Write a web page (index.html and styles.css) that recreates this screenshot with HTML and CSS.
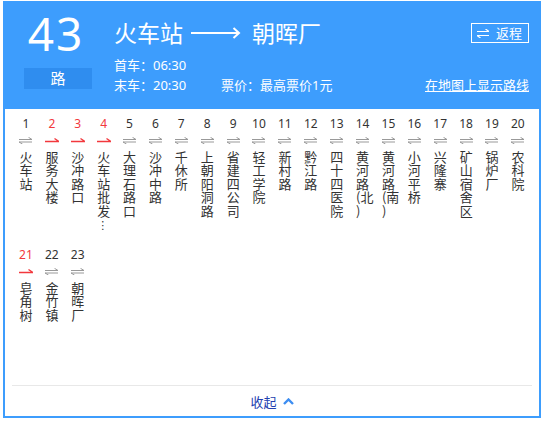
FILE: index.html
```html
<!DOCTYPE html>
<html lang="zh-CN">
<head>
<meta charset="utf-8">
<title>43路</title>
<link rel="stylesheet" href="styles.css">
</head>
<body>
<div class="panel">
  <header class="head">
    <div class="num-block">
      <div class="num">43</div>
      <div class="lu">路</div>
    </div>
    <div class="info">
      <div class="title-row">
        <span class="stn">火车站</span>
        <svg class="long-arrow" width="50" height="12" viewBox="0 0 50 12"><line x1="0" y1="6" x2="48" y2="6" stroke="#fff" stroke-width="2"/><polyline points="42.5,1 48,6 42.5,11" fill="none" stroke="#fff" stroke-width="2"/></svg>
        <span class="stn">朝晖厂</span>
        <a class="back"><svg width="12" height="9" viewBox="0 0 12 9"><path d="M0 2.5H12L8.5 0M12 6.5H0L3.5 9" fill="none" stroke="#fff" stroke-width="1.2"/></svg><span>返程</span></a>
      </div>
      <div class="line">首车：06:30</div>
      <div class="line meta">
        <span class="last">末车：20:30</span>
        <span>票价：最高票价1元</span>
        <a class="maplink">在地图上显示路线</a>
      </div>
    </div>
  </header>

  <ul class="stops">
    <li class="stop"><span class="n">1</span><svg class="arr" width="13" height="7" viewBox="0 0 13 7"><path d="M0 2.5H13L9.5 0.3M13 5H0L3.5 7" fill="none" stroke="#999" stroke-width="1"/></svg><div class="name">火<br>车<br>站</div></li>
    <li class="stop red"><span class="n">2</span><svg class="arr" width="14" height="7" viewBox="0 0 14 7"><path d="M0 4.5H14L9.5 1.5" fill="none" stroke="#f2383d" stroke-width="1.4"/></svg><div class="name">服<br>务<br>大<br>楼</div></li>
    <li class="stop red"><span class="n">3</span><svg class="arr" width="14" height="7" viewBox="0 0 14 7"><path d="M0 4.5H14L9.5 1.5" fill="none" stroke="#f2383d" stroke-width="1.4"/></svg><div class="name">沙<br>冲<br>路<br>口</div></li>
    <li class="stop red"><span class="n">4</span><svg class="arr" width="14" height="7" viewBox="0 0 14 7"><path d="M0 4.5H14L9.5 1.5" fill="none" stroke="#f2383d" stroke-width="1.4"/></svg><div class="name">火<br>车<br>站<br>批<br>发<br><span class="ell">⋮</span></div></li>
    <li class="stop"><span class="n">5</span><svg class="arr" width="13" height="7" viewBox="0 0 13 7"><path d="M0 2.5H13L9.5 0.3M13 5H0L3.5 7" fill="none" stroke="#999" stroke-width="1"/></svg><div class="name">大<br>理<br>石<br>路<br>口</div></li>
    <li class="stop"><span class="n">6</span><svg class="arr" width="13" height="7" viewBox="0 0 13 7"><path d="M0 2.5H13L9.5 0.3M13 5H0L3.5 7" fill="none" stroke="#999" stroke-width="1"/></svg><div class="name">沙<br>冲<br>中<br>路</div></li>
    <li class="stop"><span class="n">7</span><svg class="arr" width="13" height="7" viewBox="0 0 13 7"><path d="M0 2.5H13L9.5 0.3M13 5H0L3.5 7" fill="none" stroke="#999" stroke-width="1"/></svg><div class="name">千<br>休<br>所</div></li>
    <li class="stop"><span class="n">8</span><svg class="arr" width="13" height="7" viewBox="0 0 13 7"><path d="M0 2.5H13L9.5 0.3M13 5H0L3.5 7" fill="none" stroke="#999" stroke-width="1"/></svg><div class="name">上<br>朝<br>阳<br>洞<br>路</div></li>
    <li class="stop"><span class="n">9</span><svg class="arr" width="13" height="7" viewBox="0 0 13 7"><path d="M0 2.5H13L9.5 0.3M13 5H0L3.5 7" fill="none" stroke="#999" stroke-width="1"/></svg><div class="name">省<br>建<br>四<br>公<br>司</div></li>
    <li class="stop"><span class="n">10</span><svg class="arr" width="13" height="7" viewBox="0 0 13 7"><path d="M0 2.5H13L9.5 0.3M13 5H0L3.5 7" fill="none" stroke="#999" stroke-width="1"/></svg><div class="name">轻<br>工<br>学<br>院</div></li>
    <li class="stop"><span class="n">11</span><svg class="arr" width="13" height="7" viewBox="0 0 13 7"><path d="M0 2.5H13L9.5 0.3M13 5H0L3.5 7" fill="none" stroke="#999" stroke-width="1"/></svg><div class="name">新<br>村<br>路</div></li>
    <li class="stop"><span class="n">12</span><svg class="arr" width="13" height="7" viewBox="0 0 13 7"><path d="M0 2.5H13L9.5 0.3M13 5H0L3.5 7" fill="none" stroke="#999" stroke-width="1"/></svg><div class="name">黔<br>江<br>路</div></li>
    <li class="stop"><span class="n">13</span><svg class="arr" width="13" height="7" viewBox="0 0 13 7"><path d="M0 2.5H13L9.5 0.3M13 5H0L3.5 7" fill="none" stroke="#999" stroke-width="1"/></svg><div class="name">四<br>十<br>四<br>医<br>院</div></li>
    <li class="stop"><span class="n">14</span><svg class="arr" width="13" height="7" viewBox="0 0 13 7"><path d="M0 2.5H13L9.5 0.3M13 5H0L3.5 7" fill="none" stroke="#999" stroke-width="1"/></svg><div class="name">黄<br>河<br>路<br>(北<br>)</div></li>
    <li class="stop"><span class="n">15</span><svg class="arr" width="13" height="7" viewBox="0 0 13 7"><path d="M0 2.5H13L9.5 0.3M13 5H0L3.5 7" fill="none" stroke="#999" stroke-width="1"/></svg><div class="name">黄<br>河<br>路<br>(南<br>)</div></li>
    <li class="stop"><span class="n">16</span><svg class="arr" width="13" height="7" viewBox="0 0 13 7"><path d="M0 2.5H13L9.5 0.3M13 5H0L3.5 7" fill="none" stroke="#999" stroke-width="1"/></svg><div class="name">小<br>河<br>平<br>桥</div></li>
    <li class="stop"><span class="n">17</span><svg class="arr" width="13" height="7" viewBox="0 0 13 7"><path d="M0 2.5H13L9.5 0.3M13 5H0L3.5 7" fill="none" stroke="#999" stroke-width="1"/></svg><div class="name">兴<br>隆<br>寨</div></li>
    <li class="stop"><span class="n">18</span><svg class="arr" width="13" height="7" viewBox="0 0 13 7"><path d="M0 2.5H13L9.5 0.3M13 5H0L3.5 7" fill="none" stroke="#999" stroke-width="1"/></svg><div class="name">矿<br>山<br>宿<br>舍<br>区</div></li>
    <li class="stop"><span class="n">19</span><svg class="arr" width="13" height="7" viewBox="0 0 13 7"><path d="M0 2.5H13L9.5 0.3M13 5H0L3.5 7" fill="none" stroke="#999" stroke-width="1"/></svg><div class="name">锅<br>炉<br>厂</div></li>
    <li class="stop"><span class="n">20</span><svg class="arr" width="13" height="7" viewBox="0 0 13 7"><path d="M0 2.5H13L9.5 0.3M13 5H0L3.5 7" fill="none" stroke="#999" stroke-width="1"/></svg><div class="name">农<br>科<br>院</div></li>
    <li class="stop red"><span class="n">21</span><svg class="arr" width="14" height="7" viewBox="0 0 14 7"><path d="M0 4.5H14L9.5 1.5" fill="none" stroke="#f2383d" stroke-width="1.4"/></svg><div class="name">皂<br>角<br>树</div></li>
    <li class="stop"><span class="n">22</span><svg class="arr" width="13" height="7" viewBox="0 0 13 7"><path d="M0 2.5H13L9.5 0.3M13 5H0L3.5 7" fill="none" stroke="#999" stroke-width="1"/></svg><div class="name">金<br>竹<br>镇</div></li>
    <li class="stop"><span class="n">23</span><svg class="arr" width="13" height="7" viewBox="0 0 13 7"><path d="M0 2.5H13L9.5 0.3M13 5H0L3.5 7" fill="none" stroke="#999" stroke-width="1"/></svg><div class="name">朝<br>晖<br>厂</div></li>
  </ul>

  <div class="foot">
    <a class="collapse">收起</a>
    <svg class="chev" width="11" height="7" viewBox="0 0 11 7"><polyline points="1,6 5.5,1.5 10,6" fill="none" stroke="#3d8ef2" stroke-width="2.4"/></svg>
  </div>
</div>
</body>
</html>
```

FILE: styles.css
```css
* { box-sizing: border-box; }

html, body {
  margin: 0;
  padding: 0;
  background: #fff;
}

body {
  font-family: "Noto Sans", "Noto Sans CJK SC", sans-serif;
  color: #333;
}

.panel {
  margin: 1px 0 0 3px;
  width: 538px;
  height: 417px;
  border: 2px solid #3d9dfd;
  display: flex;
  flex-direction: column;
}

.head {
  height: 106px;
  background: #3d9dfd;
  color: #fff;
  display: flex;
  padding: 0 10px 0 19px;
}

.num-block {
  width: 68px;
  flex: none;
  padding-top: 7px;
}

.num {
  font-size: 46px;
  line-height: 46px;
  text-align: center;
  letter-spacing: 2px;
  padding-right: 4px;
}

.lu {
  margin-top: 12px;
  height: 21px;
  line-height: 21px;
  background: #2f8def;
  text-align: center;
  font-size: 15px;
}

.info {
  flex: 1;
  margin-left: 22px;
  padding-top: 16px;
}

.title-row {
  display: flex;
  align-items: center;
  height: 28px;
  font-size: 23px;
  line-height: 28px;
}

.long-arrow {
  margin: 0 11px 0 8px;
  display: block;
}

.back {
  margin-left: auto;
  display: flex;
  align-items: center;
  height: 20px;
  width: 58px;
  border: 1px solid #fff;
  padding-left: 5px;
  font-size: 13px;
  line-height: 18px;
}

.back svg {
  display: block;
  margin-right: 7px;
}

.line {
  font-size: 13px;
  line-height: 20px;
  height: 20px;
}

.title-row + .line {
  margin-top: 8px;
}

.meta {
  display: flex;
}

.last {
  width: 107px;
}

.maplink {
  margin-left: auto;
  text-decoration: underline;
}

.stops {
  list-style: none;
  margin: 0;
  padding: 8px 8px 0;
  height: 270px;
  display: flex;
  flex-wrap: wrap;
  align-content: flex-start;
}

.stop {
  width: 5%;
  height: 131px;
  display: flex;
  flex-direction: column;
  align-items: center;
}

.n {
  font-size: 12px;
  line-height: 14px;
  color: #333;
}

.red .n {
  color: #f2383d;
}

.arr {
  display: block;
  margin-top: 6px;
}

.name {
  align-self: flex-start;
  margin-left: 6.5px;
  margin-top: 6px;
  font-family: "Noto Sans CJK SC", sans-serif;
  font-size: 13px;
  line-height: 13.4px;
  white-space: nowrap;
  color: #333;
}

.ell {
  display: inline-block;
  width: 6px;
  text-align: center;
  font-family: "DejaVu Sans", sans-serif;
  font-size: 11px;
  line-height: 13.4px;
}

.foot {
  margin: 6px 7px 0;
  border-top: 1px solid #e8e8e8;
  height: 31px;
  display: flex;
  align-items: center;
  justify-content: center;
  gap: 6px;
}

.collapse {
  font-size: 13px;
  color: #2340b0;
}

.chev {
  display: block;
}
```
